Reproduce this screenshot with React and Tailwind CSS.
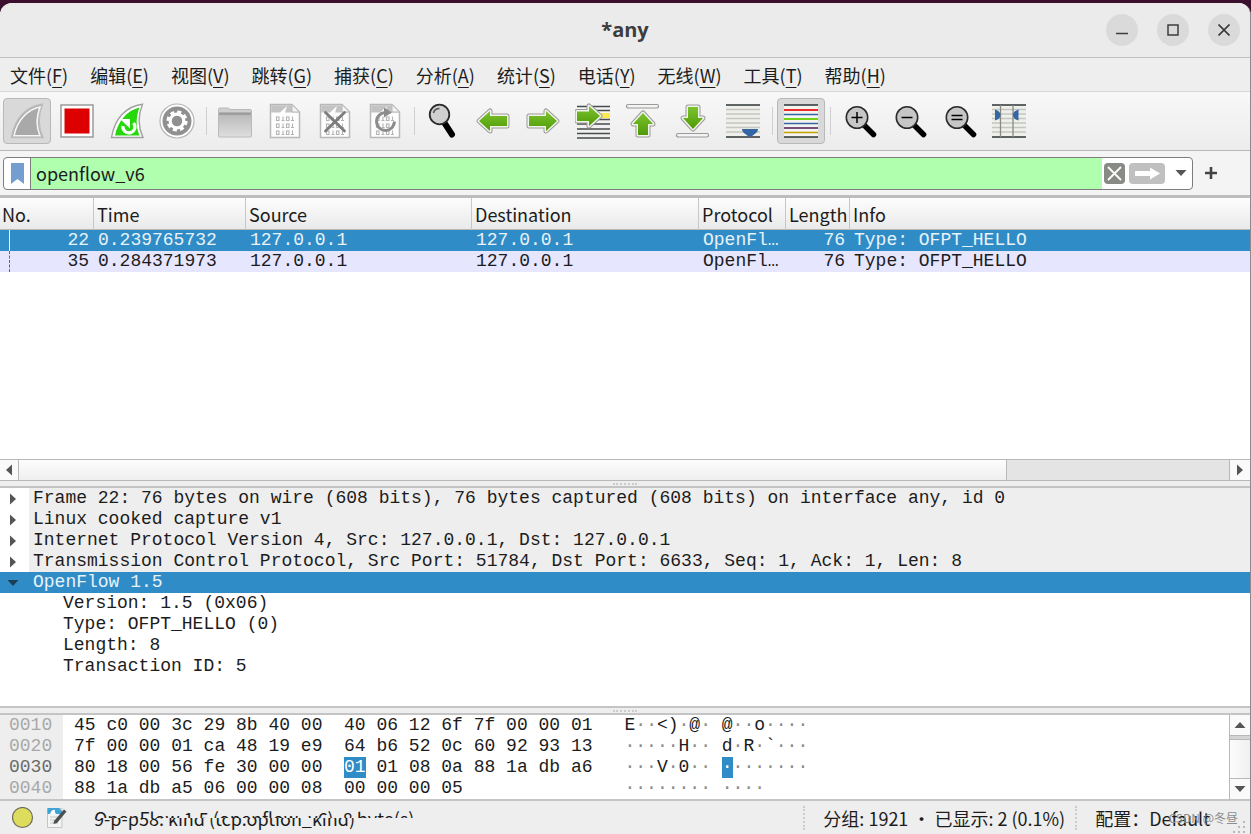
import React, { useState } from "react";

const menus = [
  ["文件", "F"],
  ["编辑", "E"],
  ["视图", "V"],
  ["跳转", "G"],
  ["捕获", "C"],
  ["分析", "A"],
  ["统计", "S"],
  ["电话", "Y"],
  ["无线", "W"],
  ["工具", "T"],
  ["帮助", "H"],
];

const packets = [
  { no: 22, time: "0.239765732", src: "127.0.0.1", dst: "127.0.0.1", proto: "OpenFl…", len: 76, info: "Type: OFPT_HELLO" },
  { no: 35, time: "0.284371973", src: "127.0.0.1", dst: "127.0.0.1", proto: "OpenFl…", len: 76, info: "Type: OFPT_HELLO" },
];

const layers = [
  "Frame 22: 76 bytes on wire (608 bits), 76 bytes captured (608 bits) on interface any, id 0",
  "Linux cooked capture v1",
  "Internet Protocol Version 4, Src: 127.0.0.1, Dst: 127.0.0.1",
  "Transmission Control Protocol, Src Port: 51784, Dst Port: 6633, Seq: 1, Ack: 1, Len: 8",
];

const fields = [
  "Version: 1.5 (0x06)",
  "Type: OFPT_HELLO (0)",
  "Length: 8",
  "Transaction ID: 5",
];

const bytes = [
  { offset: "0010", left: "45 c0 00 3c 29 8b 40 00", right: "40 06 12 6f 7f 00 00 01", ascii: "E··<)·@· @··o····" },
  { offset: "0020", left: "7f 00 00 01 ca 48 19 e9", right: "64 b6 52 0c 60 92 93 13", ascii: "·····H·· d·R·`···" },
  { offset: "0030", left: "80 18 00 56 fe 30 00 00", mark: "01", right: " 01 08 0a 88 1a db a6", ascii: "···V·0·· ", asciiMark: "·", asciiEnd: "·······" },
  { offset: "0040", left: "88 1a db a5 06 00 00 08", right: "00 00 00 05", ascii: "········ ····" },
];

const Icon = ({ children }) => (
  <svg width="36" height="36" viewBox="0 0 36 36" fill="none" aria-hidden="true">
    {children}
  </svg>
);

const finPath = "M33.5 1.2C17 3 5.5 16 2.5 34.5H34C28.5 23 29.5 11 33.5 1.2Z";

const FinIcon = () => (
  <Icon>
    <path d={finPath} fill="#a9a9a9" stroke="#bdbdbd" strokeWidth="1.5" />
    <path d="M31 4C18 6.5 8 18 5 32.8H31C27 23 27.5 13 31 4Z" fill="#a9a9a9" stroke="#f6f6f6" strokeWidth="1.6" />
  </Icon>
);

const StopIcon = () => (
  <Icon>
    <rect x="2" y="2" width="32" height="32" fill="#fff" stroke="#9a9a9a" strokeWidth="1.5" />
    <rect x="5.5" y="5.5" width="25" height="25" fill="#dd0000" />
  </Icon>
);

const RestartIcon = () => (
  <Icon>
    <path d={finPath} fill="#fff" stroke="#a0a0a0" strokeWidth="1.4" />
    <path d="M30.5 4.5C18 7.5 9 18 6 32.5H30.5C26.5 23 27 13 30.5 4.5Z" fill="#25d80a" />
    <path d="M24.5 20A6 6 0 1 1 14 23" stroke="#fff" strokeWidth="3.2" />
    <path d="M11 16H21V25.5Z" fill="#fff" />
  </Icon>
);

const GearIcon = () => (
  <Icon>
    <circle cx="18" cy="18" r="17" fill="#fff" stroke="#b5b5b5" strokeWidth="1.2" />
    <circle cx="18" cy="18" r="14.5" fill="#909090" />
    <circle cx="18" cy="18" r="8.8" stroke="#fff" strokeWidth="3.6" strokeDasharray="3.91 3" />
    <circle cx="18" cy="18" r="6.8" stroke="#fff" strokeWidth="3.2" />
    <circle cx="18" cy="18" r="5" fill="#909090" />
  </Icon>
);

const FolderIcon = () => (
  <Icon>
    <path d="M1.5 8V6.5Q1.5 5 3 5H11Q12.5 5 13 6.5H33Q34.5 6.5 34.5 8V12H1.5Z" fill="#cfcfcf" stroke="#bababa" />
    <rect x="1.5" y="10" width="33" height="24" rx="1" fill="url(#folderFill)" stroke="#bababa" />
    <rect x="2" y="9.5" width="32" height="2.5" fill="#9d9d9d" />
    <defs>
      <linearGradient id="folderFill" x1="0" y1="0" x2="0" y2="1">
        <stop offset="0" stopColor="#b8b8b8" />
        <stop offset="1" stopColor="#dedede" />
      </linearGradient>
    </defs>
  </Icon>
);

const FileIcon = ({ children }) => (
  <Icon>
    <path d="M3.5 1.5H25L32.5 9V34.5H3.5Z" fill="#fdfdfd" stroke="#b8b8b8" strokeWidth="1.5" />
    <path d="M4.2 2.2H24.5L31.5 9V9.5H18L20 3L13 9.5H4.2Z" fill="#c3c3c3" />
    <path d="M25 1.5V9H32.5Z" fill="#f4f4f4" stroke="#b8b8b8" />
    <g stroke="#b4b4b4" strokeWidth="1.1">
      {[14, 21, 28].map((y) => (
        <g key={y}>
          <rect x="9.5" y={y} width="2.5" height="3.5" />
          <path d={`M16 ${y - 0.5}V${y + 4}M14.5 ${y + 3.5}H17.5M25.5 ${y - 0.5}V${y + 4}M24 ${y + 3.5}H27`} />
          <rect x="19.5" y={y} width="2.5" height="3.5" />
        </g>
      ))}
    </g>
    {children}
  </Icon>
);

const CloseFileIcon = () => (
  <FileIcon>
    <path d="M8.5 9.5L27.5 28M27.5 9.5L8.5 28" stroke="#7c7c7c" strokeWidth="2.8" strokeLinecap="round" />
  </FileIcon>
);

const ReloadFileIcon = () => (
  <FileIcon>
    <path d="M18 9.5A9 9 0 1 0 27.5 18.5" stroke="#8c8c8c" strokeWidth="3" />
    <path d="M17 4.5L25 9.5L17 14.5Z" fill="#8c8c8c" />
  </FileIcon>
);

const FindIcon = () => (
  <Icon>
    <path d="M19.5 20L27 31.5" stroke="#000" strokeWidth="6" strokeLinecap="round" />
    <circle cx="14.5" cy="11.5" r="9.8" fill="#cfcfcf" stroke="#2b2b2b" strokeWidth="1.8" />
    <path d="M8.5 10Q9.5 5.5 14.5 5.5" stroke="#555" strokeWidth="1.5" />
  </Icon>
);

const GreenDefs = () => (
  <defs>
    <linearGradient id="green" x1="0" y1="0" x2="0" y2="1">
      <stop offset="0" stopColor="#7cc42e" />
      <stop offset="1" stopColor="#4e9a06" />
    </linearGradient>
  </defs>
);

const Arrow = ({ d }) => (
  <>
    <GreenDefs />
    <path d={d} fill="#fff" stroke="#9a9a98" strokeWidth="5" strokeLinejoin="round" />
    <path d={d} fill="url(#green)" stroke="#f3f3ee" strokeWidth="3" strokeLinejoin="round" />
    <path d={d} fill="url(#green)" />
  </>
);

const BackIcon = () => (
  <Icon>
    <Arrow d="M4 18L15 8V13H32V23H15V28Z" />
  </Icon>
);

const ForwardIcon = () => (
  <Icon>
    <Arrow d="M32 18L21 8V13H4V23H21V28Z" />
  </Icon>
);

const GotoIcon = () => (
  <Icon>
    <path d="M2 3.5H35M2 7.5H35M2 16.5H35M2 21H35M2 26H35M2 30.5H35M2 35H35" stroke="#464b4b" strokeWidth="1.6" />
    <rect x="24" y="10" width="11" height="5" fill="#fce94f" />
    <Arrow d="M25 13L14 3V8.5H2V18H14V23Z" />
  </Icon>
);

const FirstIcon = () => (
  <Icon>
    <rect x="1.5" y="1.5" width="32" height="3.5" rx="1.7" fill="#f4f4f4" stroke="#9a9a98" strokeWidth="1.2" />
    <Arrow d="M18 10L8 21H13V32H23V21H28Z" />
  </Icon>
);

const LastIcon = () => (
  <Icon>
    <rect x="1.5" y="30.5" width="32" height="3.5" rx="1.7" fill="#f4f4f4" stroke="#9a9a98" strokeWidth="1.2" />
    <Arrow d="M18 26L8 15H13V4H23V15H28Z" />
  </Icon>
);

const AutoScrollIcon = () => (
  <Icon>
    <rect x="1" y="2" width="34" height="32" fill="#efefec" />
    <path d="M1 6.5H35M1 11H35M1 15.5H35M1 20H35M1 24.5H35M1 29H35" stroke="#c4c6bf" strokeWidth="1.6" />
    <path d="M1 2H35M1 34H35" stroke="#2e3436" strokeWidth="1.6" />
    <path d="M17 26H33Q33 29 29 31.5L26.5 33.5H23.5L21 31.5Q17 29 17 26Z" fill="#3465a4" />
  </Icon>
);

const ColorizeIcon = () => (
  <Icon>
    <rect x="1" y="2" width="34" height="32" fill="#f4f4f0" />
    <path d="M1 2H35M1 34H35" stroke="#2e3436" strokeWidth="1.7" />
    <path d="M1 7H35" stroke="#ef2929" strokeWidth="2" />
    <path d="M1 11.5H35M1 20.5H35" stroke="#3465a4" strokeWidth="1.7" />
    <path d="M1 16H35" stroke="#73d216" strokeWidth="2" />
    <path d="M1 25H35" stroke="#75507b" strokeWidth="2" />
    <path d="M1 29.5H35" stroke="#c4a000" strokeWidth="1.7" />
  </Icon>
);

const ZoomGlass = ({ sign }) => (
  <Icon>
    <path d="M23 22L32.5 31.5" stroke="#000" strokeWidth="5.5" strokeLinecap="round" />
    <circle cx="16" cy="14.5" r="10.7" fill="#c6c6c6" stroke="#2b2b2b" strokeWidth="1.6" />
    <path d={sign} stroke="#000" strokeWidth="1.5" />
  </Icon>
);

const ResizeColumnsIcon = () => (
  <Icon>
    <rect x="1" y="2" width="34" height="32" fill="#efefec" />
    <path d="M1 6.5H35M1 11H35M1 15.5H35M1 20H35M1 24.5H35M1 29H35" stroke="#c4c6bf" strokeWidth="1.6" />
    <path d="M1 2H35M1 34H35" stroke="#2e3436" strokeWidth="1.6" />
    <path d="M9.5 2V34M22 2V34" stroke="#888a85" strokeWidth="1.3" />
    <path d="M4 6.5Q9.5 8 9.5 12Q9.5 16 4 17.5ZM27.5 6.5Q22 8 22 12Q22 16 27.5 17.5Z" fill="#3465a4" />
  </Icon>
);

const toolGroups = [
  [
    ["开始捕获", <FinIcon />, true],
    ["停止捕获", <StopIcon />],
    ["重新开始捕获", <RestartIcon />],
    ["捕获选项", <GearIcon />],
  ],
  [
    ["打开", <FolderIcon />],
    ["保存", <FileIcon />],
    ["关闭", <CloseFileIcon />],
    ["重新加载", <ReloadFileIcon />],
  ],
  [
    ["查找分组", <FindIcon />],
    ["上一分组", <BackIcon />],
    ["下一分组", <ForwardIcon />],
    ["转到分组", <GotoIcon />],
    ["首个分组", <FirstIcon />],
    ["最新分组", <LastIcon />],
    ["自动滚动", <AutoScrollIcon />],
  ],
  [["着色", <ColorizeIcon />, true]],
  [
    ["放大", <ZoomGlass sign="M10.5 14.5H21.5M16 9V20" />],
    ["缩小", <ZoomGlass sign="M10.5 14.5H21.5" />],
    ["普通大小", <ZoomGlass sign="M10.5 12.5H21.5M10.5 16.5H21.5" />],
    ["调整列宽", <ResizeColumnsIcon />],
  ],
];

const Triangle = ({ d, color = "#555" }) => (
  <svg width="12" height="12" viewBox="0 0 12 12" fill={color} aria-hidden="true">
    <path d={d} />
  </svg>
);

const left = "M9 0.5V11.5L3 6Z";
const right = "M3 0.5V11.5L9 6Z";
const up = "M0.5 9H11.5L6 3Z";
const down = "M0.5 3H11.5L6 9Z";

const Splitter = () => (
  <div className="h-[7px] shrink-0 bg-[#eeeeee] border-b-2 border-[#c4c4c4] flex justify-center items-center">
    <div className="w-6 border-t-2 border-dotted border-[#cccccc]"></div>
  </div>
);

// unprintable bytes are drawn in grey
const Ascii = ({ text }) =>
  text.split(/(·+)/).map((part, i) => (
    <span key={i} className={part.startsWith("·") ? "text-[#8a8a8a]" : ""}>
      {part}
    </span>
  ));

const App = () => {
  const [filter, setFilter] = useState("openflow_v6");
  const [selected, setSelected] = useState(22);
  const [open, setOpen] = useState(true);

  return (
    <div className="h-screen min-h-[600px] bg-[#3d0f2e] pt-[3px] text-[#1c1c1c] text-lg font-['Noto_Sans_CJK_SC',sans-serif]">
      <div className="h-full flex flex-col bg-[#eeeeee] rounded-t-xl border-r border-[#8f8a8d] overflow-hidden">
        <header className="h-[55px] shrink-0 bg-[#ebebeb] border-b border-[#c0c0c0] grid grid-cols-[1fr_auto_1fr] items-center px-[10px]">
          <h1 className="col-start-2 text-xl font-bold text-[#3d3d3d] font-['Open_Sans',sans-serif]">*any</h1>
          <div className="flex justify-end gap-[19px]">
            <button aria-label="最小化" className="size-8 rounded-full bg-[#dadada] flex justify-center items-center">
              <svg width="12" height="12" viewBox="0 0 12 12" stroke="#3d3d3d" strokeWidth="1.5"><path d="M0 9.5H12" /></svg>
            </button>
            <button aria-label="最大化" className="size-8 rounded-full bg-[#dadada] flex justify-center items-center">
              <svg width="12" height="12" viewBox="0 0 12 12" fill="none" stroke="#3d3d3d" strokeWidth="1.5"><path d="M1 1H11V11H1Z" /></svg>
            </button>
            <button aria-label="关闭窗口" className="size-8 rounded-full bg-[#dadada] flex justify-center items-center">
              <svg width="12" height="12" viewBox="0 0 12 12" stroke="#3d3d3d" strokeWidth="1.7"><path d="M0.5 0.5L11.5 11.5M11.5 0.5L0.5 11.5" /></svg>
            </button>
          </div>
        </header>

        <nav className="h-[34px] shrink-0 border-b border-[#d8d8d8] flex items-center gap-[22px] px-[10px]">
          {menus.map(([label, key]) => (
            <button key={key} className="leading-6 whitespace-nowrap">
              {label}(<span className="underline underline-offset-4">{key}</span>)
            </button>
          ))}
        </nav>

        <div className="h-[59px] shrink-0 bg-linear-to-b from-[#f8f8f8] to-[#ececec] border-b border-[#b8b8b8] flex items-center gap-[2px] px-[3px]">
          {toolGroups.map((group, i) => (
            <React.Fragment key={i}>
              {i > 0 && (
                <div className="w-[6px] flex justify-center">
                  <div className="w-px h-7 bg-[#cfcfcf]"></div>
                </div>
              )}
              {group.map(([name, icon, pressed]) => (
                <button
                  key={name}
                  aria-label={name}
                  className={`w-12 h-[46px] shrink-0 rounded-sm border flex justify-center items-center ${
                    pressed ? "bg-[#d9d9d9] border-[#b8b8b8]" : "border-transparent"
                  }`}
                >
                  {icon}
                </button>
              ))}
            </React.Fragment>
          ))}
        </div>

        <div className="h-[47px] shrink-0 bg-[#f4f4f4] border-b-3 border-[#bdbdbd] flex items-center pl-[3px] pr-8 gap-[11px]">
          <div className="h-[33px] flex-1 flex items-center bg-white border border-[#7d7d7d] rounded-sm overflow-hidden">
            <button aria-label="书签" className="w-[27px] h-full shrink-0 border-r border-[#7d7d7d] flex justify-center items-center">
              <svg width="13" height="21" viewBox="0 0 13 21"><path d="M0 0H13V21L6.5 16L0 21Z" fill="#729fcf" /></svg>
            </button>
            <input
              type="text"
              aria-label="显示过滤器"
              value={filter}
              onChange={(e) => setFilter(e.target.value)}
              className="flex-1 min-w-0 h-full px-[5px] bg-[#afffaf] outline-none"
            />
            <button aria-label="清除" onClick={() => setFilter("")} className="ml-[2px] w-[21px] h-[21px] rounded-sm bg-[#888a85] flex justify-center items-center">
              <svg width="15" height="15" viewBox="0 0 15 15" stroke="#fff" strokeWidth="1.8"><path d="M1 1L14 14M14 1L1 14" /></svg>
            </button>
            <button aria-label="应用" className="ml-1 w-9 h-[21px] rounded-sm bg-[#c0c0c0] flex justify-center items-center">
              <svg width="25" height="13" viewBox="0 0 25 13" fill="#fff"><path d="M0 4H15V0.5L25 6.5L15 12.5V9H0Z" /></svg>
            </button>
            <button aria-label="历史" className="w-[27px] pl-[5px] flex justify-center items-center">
              <Triangle d={down} />
            </button>
          </div>
          <button aria-label="添加" className="w-[14px]">
            <svg width="14" height="14" viewBox="0 0 14 14" stroke="#444" strokeWidth="2.6"><path d="M1 7H13M7 1V13" /></svg>
          </button>
        </div>

        <div className="flex-1 min-h-[80px] bg-white overflow-hidden">
          <table className="w-full table-fixed border-collapse">
            <colgroup>
              <col className="w-[93px]" />
              <col className="w-[152px]" />
              <col className="w-[226px]" />
              <col className="w-[227px]" />
              <col className="w-[87px]" />
              <col className="w-16" />
              <col />
            </colgroup>
            <thead>
              <tr className="h-8 bg-linear-to-b from-[#fdfdfd] to-[#e9e9e9] text-left leading-7 shadow-[inset_0_-1px_0_#b8b8b8]">
                <th className="p-0 pl-[2px] font-normal">No.</th>
                {["Time", "Source", "Destination", "Protocol", "Length", "Info"].map((name) => (
                  <th key={name} className="p-0 pl-1 font-normal shadow-[inset_1px_0_0_#c8c8c8]">{name}</th>
                ))}
              </tr>
            </thead>
            <tbody className="font-['Liberation_Mono',monospace] leading-[21px]">
              {packets.map((p) => (
                <tr
                  key={p.no}
                  onClick={() => setSelected(p.no)}
                  className={`h-[21px] ${p.no === selected ? "bg-[#308cc6] text-[#e8f2f9]" : "bg-[#e7e6ff]"}`}
                >
                  <td className="p-0 pr-1">
                    <div className="flex justify-between">
                      <span className={`ml-[9px] h-[21px] border-l ${p.no === selected ? "border-white" : "border-dashed border-[#666]"}`}></span>
                      <span>{p.no}</span>
                    </div>
                  </td>
                  <td className="p-0 pl-[5px]">{p.time}</td>
                  <td className="p-0 pl-[5px]">{p.src}</td>
                  <td className="p-0 pl-[5px]">{p.dst}</td>
                  <td className="p-0 pl-[5px]">{p.proto}</td>
                  <td className="p-0 pr-1 text-right">{p.len}</td>
                  <td className="p-0 pl-[5px]">{p.info}</td>
                </tr>
              ))}
            </tbody>
          </table>
        </div>

        <div className="h-[22px] shrink-0 flex border-y border-[#b8b8b8] bg-[#e4e4e4]">
          <button aria-label="向左" className="w-[19px] border-r border-[#b8b8b8] bg-[#fafafa] flex justify-center items-center">
            <Triangle d={left} />
          </button>
          <div className="w-[79%] border-r border-[#b8b8b8] bg-linear-to-b from-[#fdfdfd] to-[#efefef]"></div>
          <div className="flex-1"></div>
          <button aria-label="向右" className="w-[21px] border-l border-[#b8b8b8] bg-[#fafafa] flex justify-center items-center">
            <Triangle d={right} />
          </button>
        </div>
        <Splitter />

        <ul className="h-[220px] shrink-0 bg-white border-b-2 border-[#c4c4c4] overflow-hidden font-['Liberation_Mono',monospace] leading-[21px] whitespace-pre">
          {layers.map((text) => (
            <li key={text} className="flex h-[21px]">
              <button aria-label="展开" className="w-[29px] shrink-0 flex items-center pl-[7px]">
                <Triangle d={right} />
              </button>
              <span className="flex-1 min-w-0 pl-1 bg-[#eeeeee]">{text}</span>
            </li>
          ))}
          <li className="flex h-[21px] bg-[#308cc6] text-[#e8f2f9]">
            <button aria-label="折叠" onClick={() => setOpen(!open)} className="w-[29px] shrink-0 flex items-center pl-[7px]">
              <Triangle d={open ? down : right} color="#1b3f57" />
            </button>
            <span className="flex-1 min-w-0 pl-1">OpenFlow 1.5</span>
          </li>
          {open &&
            fields.map((text) => (
              <li key={text} className="h-[21px] pl-[63px]">{text}</li>
            ))}
        </ul>
        <Splitter />

        <div className="shrink-0 flex bg-white border-b-2 border-[#c4c4c4]">
          <table className="font-['Liberation_Mono',monospace] leading-[21px] whitespace-pre">
            <tbody>
              {bytes.map((row) => (
                <tr key={row.offset} className="h-[21px]">
                  <td className={`p-0 pl-[9px] w-[63px] bg-[#eeeeee] ${row.mark ? "text-[#6a6a6a]" : "text-[#a8a8a8]"}`}>{row.offset}</td>
                  <td className="p-0 pl-[11px] pr-8">
                    {row.left}{"  "}
                    {row.mark && <span className="inline-block bg-[#308cc6] text-white">{row.mark}</span>}
                    {row.right}
                  </td>
                  <td className="p-0">
                    <Ascii text={row.ascii} />
                    {row.asciiMark && <span className="inline-block bg-[#308cc6] text-white">{row.asciiMark}</span>}
                    {row.asciiEnd && <Ascii text={row.asciiEnd} />}
                  </td>
                </tr>
              ))}
            </tbody>
          </table>
          <div className="ml-auto w-[21px] border-l border-[#b8b8b8] bg-[#fafafa] flex flex-col">
            <button aria-label="向上" className="h-5 flex justify-center items-center">
              <Triangle d={up} />
            </button>
            <div className="h-1 bg-[#d4d4d4] border-t border-[#b8b8b8]"></div>
            <div className="flex-1 border-y border-[#b8b8b8] bg-linear-to-r from-[#fdfdfd] to-[#efefef]"></div>
            <button aria-label="向下" className="h-5 flex justify-center items-center">
              <Triangle d={down} />
            </button>
          </div>
        </div>

        <footer className="relative h-[33px] shrink-0 flex items-center pl-3 whitespace-nowrap">
          <svg width="22" height="22" viewBox="0 0 22 22" aria-hidden="true">
            <circle cx="10.5" cy="10.5" r="10" fill="#dedc5c" stroke="#6d6d5c" strokeWidth="1.2" />
          </svg>
          <svg className="ml-3" width="22" height="22" viewBox="0 0 22 22" aria-hidden="true">
            <path d="M1.5 1.5H16V20.5H1.5Z" fill="#f4f4f4" stroke="#c4c4c4" />
            <path d="M1.5 1H13L16 4V7H1.5Z" fill="#3fa3d8" />
            <path d="M4 7Q6 2 9 3Q8 5 10 7Z" fill="#fff" />
            <path d="M4 10H12M4 13H10M4 16H12" stroke="#c4c4c4" />
            <path d="M8 14L18 2.5L20.5 4.5L11 16L7.5 17Z" fill="#4b4f50" />
          </svg>
          {/* field label and layer label share one line */}
          <div className="ml-[26px] flex flex-col leading-6">
            <div className="h-3 overflow-hidden">OpenFlow 1.5 (openflow_v6), 8 byte(s)</div>
            <div className="h-3 overflow-hidden flex items-end">9-p-p58: kind (tcp.option_kind)</div>
          </div>
          <div className="ml-auto h-6 border-l-2 border-dotted border-[#cccccc] pl-[18px] leading-6">分组: 1921 · 已显示: 2 (0.1%)</div>
          <div className="ml-[10px] h-6 border-l-2 border-dotted border-[#cccccc] pl-[18px] pr-10 leading-6">配置：Default</div>
          <span className="absolute right-3 bottom-2 text-xs leading-4 text-[#8f8f8f]">CSDN @冬昼</span>
          <svg className="absolute right-1 bottom-0" width="14" height="14" viewBox="0 0 14 14" fill="#b8b8b8" aria-hidden="true">
            <path d="M11 1h2v2h-2zM6 6h2v2h-2zM11 6h2v2h-2zM1 11h2v2h-2zM6 11h2v2h-2zM11 11h2v2h-2z" />
          </svg>
        </footer>
      </div>
    </div>
  );
};

export default App;
